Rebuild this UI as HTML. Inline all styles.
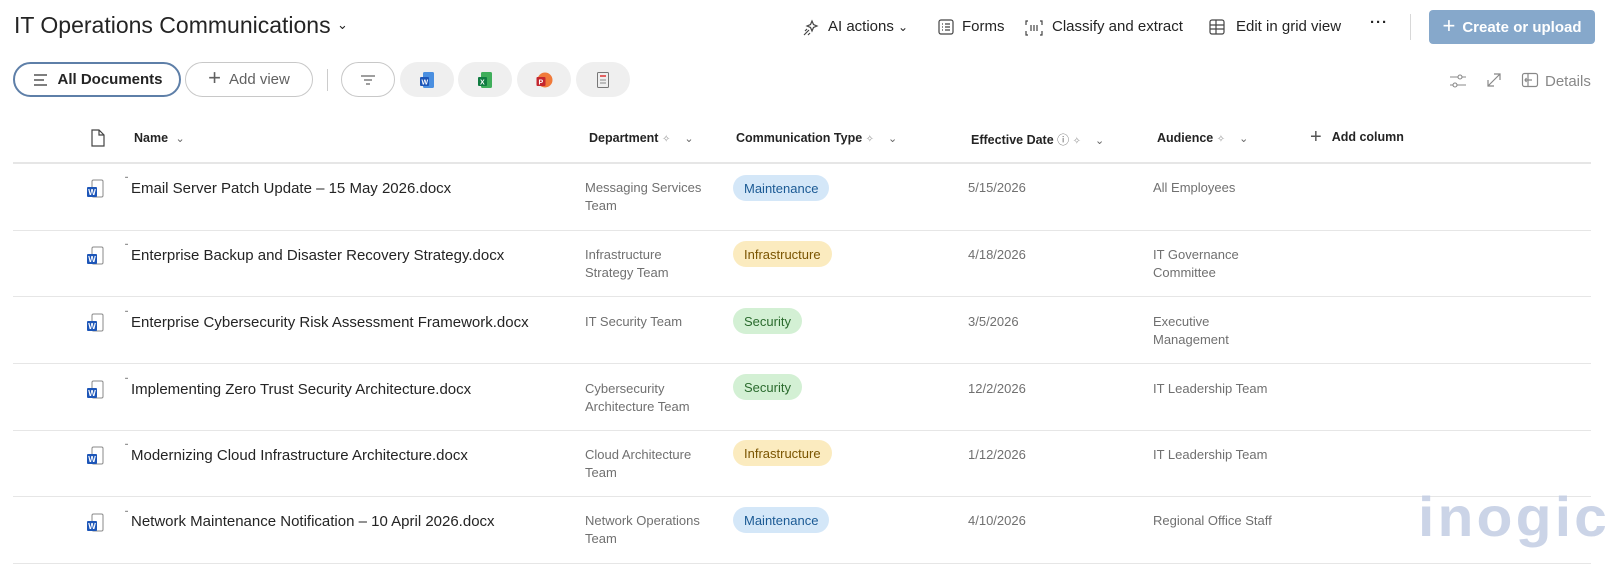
<!DOCTYPE html>
<html><head><meta charset="utf-8"><style>
*{margin:0;padding:0;box-sizing:border-box}
body{width:1605px;height:580px;background:#fff;font-family:"Liberation Sans",sans-serif;color:#242424;position:relative;overflow:hidden}
.a{position:absolute;white-space:nowrap}
.title{left:14px;top:12px;font-size:23px;color:#242424}
.tb{font-size:15px;color:#242424;top:18px}
.pill{position:absolute;height:35px;border-radius:18px;top:62px;display:flex;align-items:center;justify-content:center;font-size:15px}
.hd{top:131px;font-size:12.5px;font-weight:bold;color:#242424}
.line{position:absolute;left:13px;width:1578px;height:1px;background:#e6e6e6}
.nm{font-size:15px;color:#242424}
.dp{font-size:13px;color:#707070;line-height:18px}
.tag{position:absolute;height:26px;border-radius:13px;font-size:13px;display:flex;align-items:center;padding:0 11px}
.mt{background:#d4e7f8;color:#1b5a94}
.in{background:#fbebbf;color:#7a5400}
.se{background:#d3f0d4;color:#2b6b2e}
.wi{position:absolute;width:18px;height:20px}
</style></head><body>
<div class="a title">IT Operations Communications <span style="font-size:13px;vertical-align:4px">&#8964;</span></div>

<svg class="a" style="left:802px;top:19px" width="18" height="18" viewBox="0 0 18 18" fill="none" stroke="#444" stroke-width="1.2"><path d="M10 2l1.5 3.5L15 7l-3.5 1.5L10 12 8.5 8.5 5 7l3.5-1.5z"/><path d="M2 16l5-5M3 12l2-2M6 16l2-2"/></svg>
<div class="a tb" style="left:828px">AI actions <span style="font-size:12px">&#8964;</span></div>
<svg class="a" style="left:937px;top:18px" width="18" height="18" viewBox="0 0 18 18" fill="none" stroke="#444" stroke-width="1.2"><rect x="2" y="2" width="14" height="14" rx="2"/><path d="M5 6h1M8 6h5M5 9h1M8 9h5M5 12h1M8 12h5"/></svg>
<div class="a tb" style="left:962px">Forms</div>
<svg class="a" style="left:1024px;top:19px" width="20" height="18" viewBox="0 0 20 18" fill="none" stroke="#444" stroke-width="1.2"><path d="M4 2H2v4M16 2h2v4M4 16H2v-4M16 16h2v-4M7 6v6M10 6v6M13 6v6"/></svg>
<div class="a tb" style="left:1052px">Classify and extract</div>
<svg class="a" style="left:1208px;top:18px" width="18" height="18" viewBox="0 0 18 18" fill="none" stroke="#444" stroke-width="1.2"><rect x="2" y="2" width="14" height="14" rx="2"/><path d="M2 7h14M2 11h14M8 2v14"/></svg>
<div class="a tb" style="left:1236px">Edit in grid view</div>
<div class="a tb" style="left:1370px;top:14px;font-weight:bold;letter-spacing:1px">&middot;&middot;&middot;</div>
<div class="a" style="left:1410px;top:14px;width:1px;height:26px;background:#d8d8d8"></div>
<div class="a" style="left:1429px;top:10px;width:166px;height:34px;border-radius:4px;background:#86a8cb;color:#fff;font-size:15px;font-weight:bold;display:flex;align-items:center;justify-content:center"><span style="font-size:22px;font-weight:normal;margin-right:7px;margin-top:-3px">+</span>Create or upload</div>

<div class="pill" style="left:13px;width:168px;border:2px solid #5e7fa8;font-weight:bold">
<svg width="18" height="16" style="margin-right:8px" viewBox="0 0 18 16" stroke="#333" stroke-width="1.3"><path d="M3 3h13M3 8h10M3 13h13"/></svg>All Documents</div>
<div class="pill" style="left:185px;width:128px;border:1px solid #c8c8c8;color:#616161"><span style="font-size:22px;margin-right:8px;margin-top:-3px">+</span>Add view</div>
<div class="a" style="left:327px;top:69px;width:1px;height:22px;background:#ccc"></div>
<div class="pill" style="left:341px;width:54px;border:1px solid #c8c8c8"><svg width="18" height="14" viewBox="0 0 18 14" stroke="#666" stroke-width="1.2"><path d="M2 3h14M5 7h8M7 11h4"/></svg></div>
<div class="pill" style="left:400px;width:54px;background:#efefef"><svg width="16" height="18" viewBox="0 0 16 18"><rect x="4" y="1" width="11" height="16" rx="1.5" fill="#4a8fe0"/><rect x="1" y="6" width="9" height="9" rx="1" fill="#1d56b8"/><text x="2.5" y="13.5" font-size="7" fill="#fff" font-family="Liberation Sans" font-weight="bold">W</text></svg></div>
<div class="pill" style="left:458px;width:54px;background:#efefef"><svg width="16" height="18" viewBox="0 0 16 18"><rect x="4" y="1" width="11" height="16" rx="1.5" fill="#3fae5b"/><rect x="1" y="6" width="9" height="9" rx="1" fill="#107c41"/><text x="3" y="13.5" font-size="7" fill="#fff" font-family="Liberation Sans" font-weight="bold">X</text></svg></div>
<div class="pill" style="left:517px;width:54px;background:#efefef"><svg width="18" height="18" viewBox="0 0 18 18"><circle cx="10" cy="9" r="7.5" fill="#f07a3a"/><rect x="1.5" y="6" width="9" height="9" rx="1" fill="#c4262e"/><text x="3.5" y="13.5" font-size="7" fill="#fff" font-family="Liberation Sans" font-weight="bold">P</text></svg></div>
<div class="pill" style="left:576px;width:54px;background:#efefef"><svg width="14" height="18" viewBox="0 0 14 18" fill="none"><rect x="1.5" y="1.5" width="11" height="15" rx="1" stroke="#777"/><path d="M4 5h6" stroke="#d33" stroke-width="1.5"/><path d="M4 9h6M4 12h6" stroke="#888"/></svg></div>

<svg class="a" style="left:1448px;top:72px" width="20" height="18" viewBox="0 0 20 18" fill="none" stroke="#888" stroke-width="1.1"><path d="M2 5h16M2 13h16"/><circle cx="12" cy="5" r="2" fill="#fff"/><circle cx="7" cy="13" r="2" fill="#fff"/></svg>
<svg class="a" style="left:1485px;top:71px" width="18" height="18" viewBox="0 0 18 18" fill="none" stroke="#888" stroke-width="1.2"><path d="M3 15L15 3M9 3h6v6M3 9v6h6"/></svg>
<svg class="a" style="left:1521px;top:72px" width="18" height="16" viewBox="0 0 18 16" fill="none" stroke="#888" stroke-width="1.2"><rect x="1.5" y="1.5" width="15" height="13" rx="2"/><path d="M7 1.5v13M11 8H4M5.5 6L4 8l1.5 2"/></svg>
<div class="a" style="left:1545px;top:73px;font-size:15px;color:#888">Details</div>

<svg class="a" style="left:90px;top:128px" width="16" height="20" viewBox="0 0 16 20" fill="none" stroke="#444" stroke-width="1.2"><path d="M2 2h7l5 5v11H2z M9 2v5h5"/></svg>
<div class="a hd" style="left:134px">Name <span style="font-weight:normal;font-size:11px;color:#666;margin-left:4px">&#8964;</span></div>
<div class="a hd" style="left:589px">Department <span style="font-weight:normal;color:#999;font-size:10px">&#10023;</span><span style="font-weight:normal;font-size:11px;color:#666;margin-left:14px">&#8964;</span></div>
<div class="a hd" style="left:736px">Communication Type <span style="font-weight:normal;color:#999;font-size:10px">&#10023;</span><span style="font-weight:normal;font-size:11px;color:#666;margin-left:14px">&#8964;</span></div>
<div class="a hd" style="left:971px">Effective Date <span style="font-weight:normal;color:#666;font-size:12px">&#9432;</span> <span style="font-weight:normal;color:#999;font-size:10px">&#10023;</span><span style="font-weight:normal;font-size:11px;color:#666;margin-left:14px">&#8964;</span></div>
<div class="a hd" style="left:1157px">Audience <span style="font-weight:normal;color:#999;font-size:10px">&#10023;</span><span style="font-weight:normal;font-size:11px;color:#666;margin-left:14px">&#8964;</span></div>
<div class="a hd" style="left:1310px;top:126px"><span style="font-weight:normal;font-size:20px;color:#555;margin-right:10px">+</span><span style="vertical-align:2px">Add column</span></div>

<div class="line" style="top:162px;height:2px"></div>
<div class="line" style="top:230px"></div>
<div class="line" style="top:296px"></div>
<div class="line" style="top:363px"></div>
<div class="line" style="top:430px"></div>
<div class="line" style="top:496px"></div>
<div class="line" style="top:563px"></div>

<svg class="wi" style="left:86px;top:179px" viewBox="0 0 18 20"><rect x="6" y="1" width="11" height="17" rx="1.5" fill="#fff" stroke="#8a8a8a"/><rect x="1" y="8" width="10" height="10" rx="1" fill="#1d56b8"/><text x="2.2" y="16" font-size="8" fill="#fff" font-family="Liberation Sans" font-weight="bold">W</text></svg>
<div class="a" style="left:124px;top:173px;font-size:10px;color:#888">&#8259;</div>
<div class="a nm" style="left:131px;top:180px">Email Server Patch Update – 15 May 2026.docx</div>
<div class="a dp" style="left:585px;top:179px">Messaging Services<br>Team</div>
<div class="tag mt" style="left:733px;top:175px">Maintenance</div>
<div class="a dp" style="left:968px;top:179px">5/15/2026</div>
<div class="a dp" style="left:1153px;top:179px">All Employees</div>

<svg class="wi" style="left:86px;top:246px" viewBox="0 0 18 20"><rect x="6" y="1" width="11" height="17" rx="1.5" fill="#fff" stroke="#8a8a8a"/><rect x="1" y="8" width="10" height="10" rx="1" fill="#1d56b8"/><text x="2.2" y="16" font-size="8" fill="#fff" font-family="Liberation Sans" font-weight="bold">W</text></svg>
<div class="a" style="left:124px;top:240px;font-size:10px;color:#888">&#8259;</div>
<div class="a nm" style="left:131px;top:247px">Enterprise Backup and Disaster Recovery Strategy.docx</div>
<div class="a dp" style="left:585px;top:246px">Infrastructure<br>Strategy Team</div>
<div class="tag in" style="left:733px;top:241px">Infrastructure</div>
<div class="a dp" style="left:968px;top:246px">4/18/2026</div>
<div class="a dp" style="left:1153px;top:246px">IT Governance<br>Committee</div>

<svg class="wi" style="left:86px;top:313px" viewBox="0 0 18 20"><rect x="6" y="1" width="11" height="17" rx="1.5" fill="#fff" stroke="#8a8a8a"/><rect x="1" y="8" width="10" height="10" rx="1" fill="#1d56b8"/><text x="2.2" y="16" font-size="8" fill="#fff" font-family="Liberation Sans" font-weight="bold">W</text></svg>
<div class="a" style="left:124px;top:307px;font-size:10px;color:#888">&#8259;</div>
<div class="a nm" style="left:131px;top:314px">Enterprise Cybersecurity Risk Assessment Framework.docx</div>
<div class="a dp" style="left:585px;top:313px">IT Security Team</div>
<div class="tag se" style="left:733px;top:308px">Security</div>
<div class="a dp" style="left:968px;top:313px">3/5/2026</div>
<div class="a dp" style="left:1153px;top:313px">Executive<br>Management</div>

<svg class="wi" style="left:86px;top:380px" viewBox="0 0 18 20"><rect x="6" y="1" width="11" height="17" rx="1.5" fill="#fff" stroke="#8a8a8a"/><rect x="1" y="8" width="10" height="10" rx="1" fill="#1d56b8"/><text x="2.2" y="16" font-size="8" fill="#fff" font-family="Liberation Sans" font-weight="bold">W</text></svg>
<div class="a" style="left:124px;top:374px;font-size:10px;color:#888">&#8259;</div>
<div class="a nm" style="left:131px;top:381px">Implementing Zero Trust Security Architecture.docx</div>
<div class="a dp" style="left:585px;top:380px">Cybersecurity<br>Architecture Team</div>
<div class="tag se" style="left:733px;top:374px">Security</div>
<div class="a dp" style="left:968px;top:380px">12/2/2026</div>
<div class="a dp" style="left:1153px;top:380px">IT Leadership Team</div>

<svg class="wi" style="left:86px;top:446px" viewBox="0 0 18 20"><rect x="6" y="1" width="11" height="17" rx="1.5" fill="#fff" stroke="#8a8a8a"/><rect x="1" y="8" width="10" height="10" rx="1" fill="#1d56b8"/><text x="2.2" y="16" font-size="8" fill="#fff" font-family="Liberation Sans" font-weight="bold">W</text></svg>
<div class="a" style="left:124px;top:440px;font-size:10px;color:#888">&#8259;</div>
<div class="a nm" style="left:131px;top:447px">Modernizing Cloud Infrastructure Architecture.docx</div>
<div class="a dp" style="left:585px;top:446px">Cloud Architecture<br>Team</div>
<div class="tag in" style="left:733px;top:440px">Infrastructure</div>
<div class="a dp" style="left:968px;top:446px">1/12/2026</div>
<div class="a dp" style="left:1153px;top:446px">IT Leadership Team</div>

<svg class="wi" style="left:86px;top:513px" viewBox="0 0 18 20"><rect x="6" y="1" width="11" height="17" rx="1.5" fill="#fff" stroke="#8a8a8a"/><rect x="1" y="8" width="10" height="10" rx="1" fill="#1d56b8"/><text x="2.2" y="16" font-size="8" fill="#fff" font-family="Liberation Sans" font-weight="bold">W</text></svg>
<div class="a" style="left:124px;top:507px;font-size:10px;color:#888">&#8259;</div>
<div class="a nm" style="left:131px;top:513px">Network Maintenance Notification – 10 April 2026.docx</div>
<div class="a dp" style="left:585px;top:512px">Network Operations<br>Team</div>
<div class="tag mt" style="left:733px;top:507px">Maintenance</div>
<div class="a dp" style="left:968px;top:512px">4/10/2026</div>
<div class="a dp" style="left:1153px;top:512px">Regional Office Staff</div>

<div class="a" style="left:1418px;top:484px;font-size:56px;font-weight:bold;color:#c3cde3;letter-spacing:3px;opacity:.85;transform:scaleX(1.05);transform-origin:left">inogic</div>
</body></html>
